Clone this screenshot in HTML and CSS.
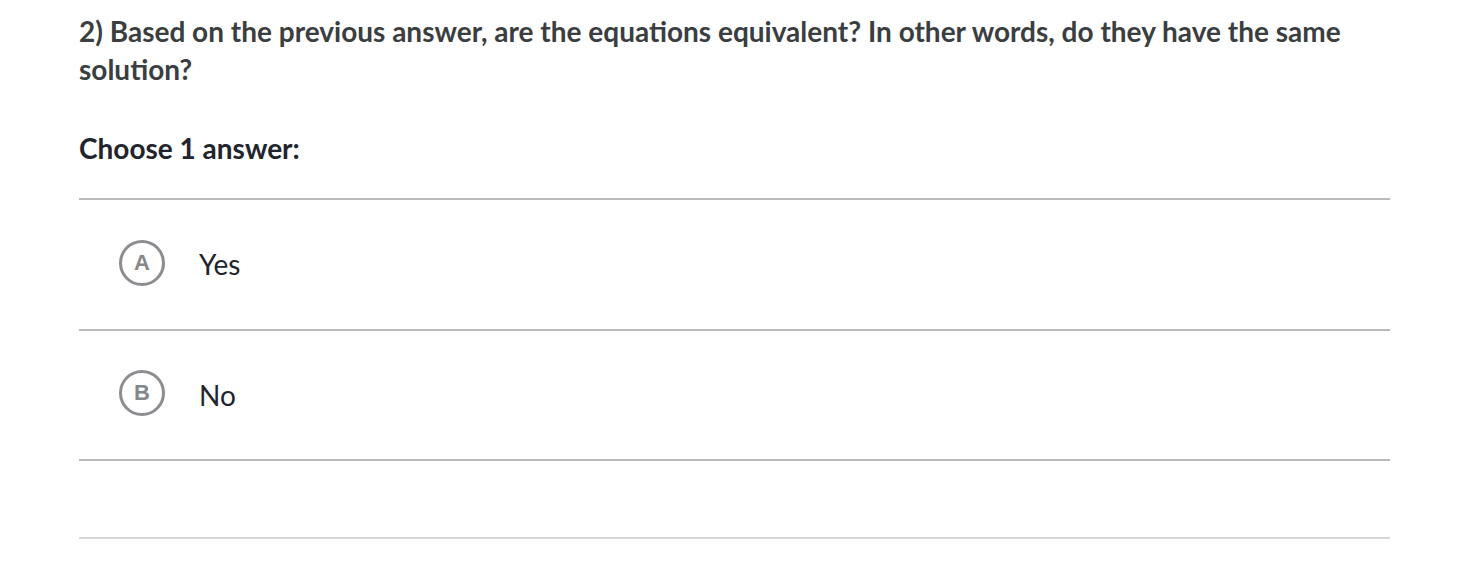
FILE: index.html
```html
<!DOCTYPE html>
<html>
<head>
<meta charset="utf-8">
<link rel="stylesheet" href="styles.css">
</head>
<body>
<div class="page">
  <div class="question">2) Based on the previous answer, are the equations equivalent? In other words, do they have the same solution?</div>
  <div class="prompt">Choose 1 answer:</div>
  <ul class="choices">
    <li class="choice"><span class="letter">A</span><span class="label">Yes</span></li>
    <li class="choice"><span class="letter">B</span><span class="label">No</span></li>
  </ul>
  <div class="spacer"></div>
</div>
</body>
</html>
```
FILE: styles.css
```css
html, body {
  margin: 0;
  padding: 0;
  background: #ffffff;
}
.page {
  width: 1311px;
  margin-left: 79px;
  padding-top: 12px;
  font-family: Lato, "Liberation Sans", sans-serif;
}
.question {
  font-size: 28px;
  font-weight: 700;
  line-height: 38px;
  color: #3b3e40;
}
.prompt {
  margin-top: 41px;
  font-size: 28px;
  font-weight: 700;
  line-height: 38px;
  color: #21242c;
}
.choices {
  list-style: none;
  margin: 31px 0 0 0;
  padding: 0;
  border-top: 2px solid #bababa;
}
.choice {
  height: 128.5px;
  display: flex;
  align-items: center;
  border-bottom: 2px solid #bababa;
  padding-left: 40px;
}
.letter {
  box-sizing: border-box;
  width: 46px;
  height: 46px;
  margin-top: -3px;
  border: 3px solid #8b8d91;
  border-radius: 50%;
  display: flex;
  align-items: center;
  justify-content: center;
  font-family: "Liberation Sans", Arial, sans-serif;
  font-size: 22px;
  font-weight: 700;
  line-height: 1;
  color: #85878b;
}
.label {
  margin-left: 34px;
  font-size: 28px;
  color: #21242c;
}
.spacer {
  height: 76px;
  border-bottom: 2px solid #d6d6d6;
}
```
